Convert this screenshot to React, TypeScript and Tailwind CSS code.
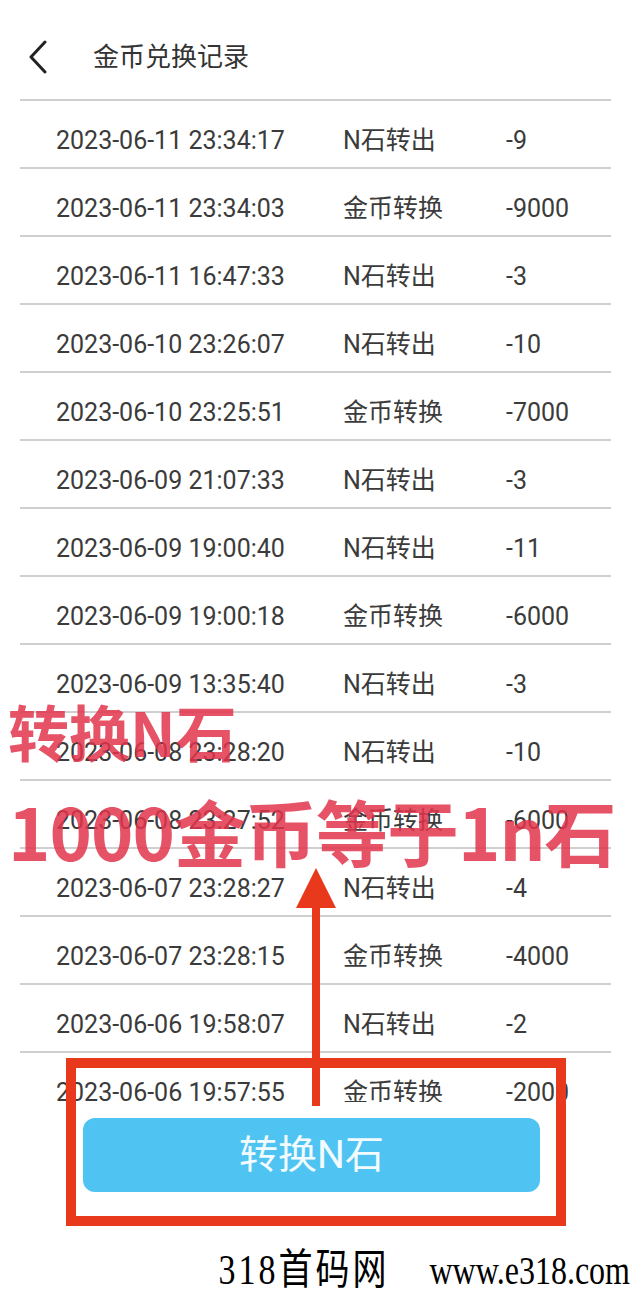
const records = [
  { time: "2023-06-11 23:34:17", kind: "N石转出", amount: "-9" },
  { time: "2023-06-11 23:34:03", kind: "金币转换", amount: "-9000" },
  { time: "2023-06-11 16:47:33", kind: "N石转出", amount: "-3" },
  { time: "2023-06-10 23:26:07", kind: "N石转出", amount: "-10" },
  { time: "2023-06-10 23:25:51", kind: "金币转换", amount: "-7000" },
  { time: "2023-06-09 21:07:33", kind: "N石转出", amount: "-3" },
  { time: "2023-06-09 19:00:40", kind: "N石转出", amount: "-11" },
  { time: "2023-06-09 19:00:18", kind: "金币转换", amount: "-6000" },
  { time: "2023-06-09 13:35:40", kind: "N石转出", amount: "-3" },
  { time: "2023-06-08 23:28:20", kind: "N石转出", amount: "-10" },
  { time: "2023-06-08 23:27:52", kind: "金币转换", amount: "-6000" },
  { time: "2023-06-07 23:28:27", kind: "N石转出", amount: "-4" },
  { time: "2023-06-07 23:28:15", kind: "金币转换", amount: "-4000" },
  { time: "2023-06-06 19:58:07", kind: "N石转出", amount: "-2" },
  { time: "2023-06-06 19:57:55", kind: "金币转换", amount: "-2000" },
];

const sans = "font-['Roboto','Noto_Sans_CJK_SC',sans-serif]";

export default function App() {
  return (
    <div className={`relative h-[1295px] w-[631px] overflow-hidden bg-white ${sans}`}>
      {/* header */}
      <header className="flex h-[99px] items-center">
        <svg className="ml-[28px] mt-[14px]" width="20" height="34" viewBox="0 0 20 34" fill="none">
          <path d="M17 2 L3 17 L17 32" stroke="#222" strokeWidth="3" strokeLinecap="round" strokeLinejoin="round" />
        </svg>
        <h1 className="ml-[45px] mt-[14px] text-[26px] leading-none text-[#333]">金币兑换记录</h1>
      </header>

      {/* records list */}
      <div className="mx-[20px] h-[1003px] overflow-hidden border-t-2 border-[#cfcfcf]">
        {records.map((r) => (
          <div
            key={r.time}
            className="flex h-[68px] items-center border-b-2 border-[#cfcfcf] pt-[12px] text-[25px] leading-none text-[#3b3b3b]"
          >
            <span className="ml-[36px] w-[287px] shrink-0">{r.time}</span>
            <span className="w-[163px] shrink-0">{r.kind}</span>
            <span>{r.amount}</span>
          </div>
        ))}
      </div>

      {/* action */}
      <div className="px-[83px] pt-[16px]">
        <button className="flex h-[74px] w-[457px] items-center justify-center rounded-[12px] bg-[#4fc4f2] text-[39px] text-[#f2fbff]">
          转换N石
        </button>
      </div>

      {/* watermark */}
      <p className="absolute bottom-[8px] right-[1px] flex scale-y-[1.25] items-baseline gap-[40px] leading-none text-black font-['Liberation_Serif','Noto_Sans_CJK_SC',serif]">
        <span className="text-[34px] tracking-[3px]">318首码网</span>
        <span className="text-[32px]">www.e318.com</span>
      </p>

      {/* annotation overlays */}
      <div className="pointer-events-none absolute left-[66px] top-[1058px] h-[168px] w-[500px] border-[10px] border-[#e8391c]" />
      <svg className="pointer-events-none absolute left-[290px] top-[866px]" width="52" height="242" viewBox="0 0 52 242">
        <polygon points="26,2 6,42 46,42" fill="#e8391c" />
        <rect x="22" y="40" width="8" height="200" fill="#e8391c" />
      </svg>
      <div className="pointer-events-none absolute left-[8px] top-[700px] text-[61px] font-semibold leading-none text-[#e2344b]/85 font-['Noto_Sans_CJK_SC',sans-serif]">
        转换N石
      </div>
      <div className="pointer-events-none absolute left-[8px] top-[794px] text-[72px] font-semibold leading-none tracking-[-1px] text-[#e2344b]/85 font-['Noto_Sans_CJK_SC',sans-serif]">
        1000金币等于1n石
      </div>
    </div>
  );
}
